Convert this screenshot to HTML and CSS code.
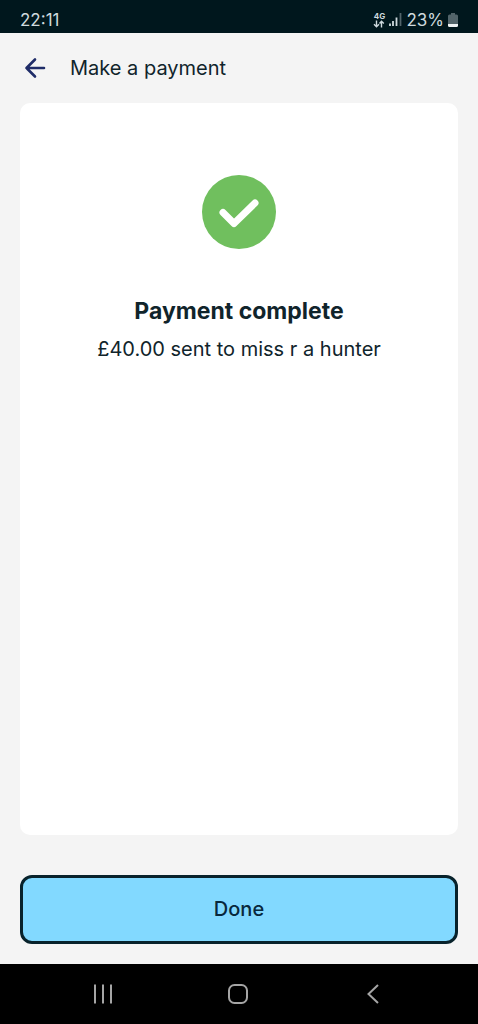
FILE: index.html
```html
<!DOCTYPE html>
<html lang="en">
<head>
<meta charset="utf-8">
<meta name="viewport" content="width=device-width, initial-scale=1">
<title>Make a payment</title>
<link rel="stylesheet" href="styles.css">
</head>
<body>
<div class="status-bar">
  <time class="clock">22:11</time>
  <div class="status-icons">
    <div class="network">
      <span>4G</span>
      <svg width="12" height="8" viewBox="0 0 12 8" aria-hidden="true"><path d="M3.5 .5v6M1 4.3l2.5 2.5L6 4.3M8.5 7.5v-6M6.5 3.5l2-2.3 2.3 2.3" fill="none" stroke="currentColor" stroke-width="1.4"/></svg>
    </div>
    <svg class="signal" width="13" height="14" viewBox="0 0 13 14" aria-hidden="true"><path d="M1 10.5V13M4 8v5M7.5 4.5V13" stroke="#cfdade" stroke-width="1.8"/><path d="M11.5 0v13" stroke="#52646a" stroke-width="1.8"/></svg>
    <span class="percent">23%</span>
    <svg width="10" height="15" viewBox="0 0 10 15" aria-hidden="true"><path d="M3 0h4v1.5h1.5q1.5 0 1.5 1.5v8H0V3q0-1.5 1.5-1.5H3z" fill="#52646a"/><path d="M0 11h10v1.5q0 1.500-1.5 1.500h-7Q0 14 0 12.500z" fill="#eef3f4"/></svg>
  </div>
</div>
<header class="header">
  <button class="back" type="button" aria-label="Back"><svg width="22" height="22" viewBox="0 0 22 22" aria-hidden="true"><path d="M20 11H2.500M11 2.500L2.500 11l8.500 8.500" fill="none" stroke="#1f2c68" stroke-width="2.600" stroke-linecap="round" stroke-linejoin="round"/></svg></button>
  <h1 class="title">Make a payment</h1>
</header>
<main class="card">
  <svg class="tick" width="74" height="74" viewBox="0 0 74 74" aria-hidden="true"><circle cx="37" cy="37" r="37" fill="#70bf5e"/><path d="M21 37.500L32 48.500 53 28" fill="none" stroke="#fff" stroke-width="7" stroke-linecap="round" stroke-linejoin="round"/></svg>
  <h2 class="heading">Payment complete</h2>
  <p class="detail">£40.00 sent to miss r a hunter</p>
</main>
<div class="actions"><button class="done" type="button">Done</button></div>
<nav class="system-nav" aria-label="System">
  <button type="button" aria-label="Recent apps"><svg width="20" height="20" viewBox="0 0 20 20"><path d="M2 .5v19M10 .5v19M18 .5v19"/></svg></button>
  <button type="button" aria-label="Home"><svg width="20" height="20" viewBox="0 0 20 20"><rect x="1" y="1" width="18" height="18" rx="5.500"/></svg></button>
  <button type="button" aria-label="Back"><svg width="20" height="20" viewBox="0 0 20 20"><path d="M15 1L5.500 10l9.500 9"/></svg></button>
</nav>
</body>
</html>
```
FILE: styles.css
```css
* {
  box-sizing: border-box;
}

body {
  margin: 0;
  min-height: 100vh;
  display: flex;
  flex-direction: column;
  background: #f4f4f4;
  color: #10242b;
  font-family: Inter, "Liberation Sans", sans-serif;
}

button {
  padding: 0;
  border: 0;
  background: none;
  font: inherit;
  color: inherit;
  cursor: pointer;
}

svg {
  display: block;
}

.status-bar {
  display: flex;
  justify-content: space-between;
  align-items: center;
  padding: 8px 20px 1px;
  background: #00171d;
  color: #cfdade;
  line-height: 24px;
}

.clock {
  font-size: 17px;
}

.status-icons {
  display: flex;
  align-items: center;
  gap: 4px;
}

.network {
  display: flex;
  flex-direction: column;
  align-items: center;
  font-size: 8px;
  font-weight: 700;
  line-height: 8px;
}

.percent {
  font-size: 17px;
}

.header {
  display: flex;
  align-items: center;
  gap: 24px;
  height: 70px;
  padding: 0 24px;
}

.title {
  margin: 0;
  font-size: 20px;
  font-weight: 400;
  line-height: 28px;
}

.card {
  flex: 1;
  display: flex;
  flex-direction: column;
  align-items: center;
  margin: 0 20px;
  padding: 72px 20px;
  border-radius: 10px;
  background: #fff;
  text-align: center;
}

.heading {
  margin: 46px 0 0;
  font-size: 23px;
  font-weight: 700;
  line-height: 32px;
}

.detail {
  margin: 8px 0 0;
  font-size: 20px;
  line-height: 28px;
}

.actions {
  padding: 40px 20px 20px;
}

.done {
  display: block;
  width: 100%;
  padding: 18px;
  border: 3px solid #08222b;
  border-radius: 12px;
  background: #82d9ff;
  color: #08283c;
  font-size: 20px;
  font-weight: 500;
  line-height: 27px;
}

.system-nav {
  display: flex;
  justify-content: space-around;
  padding: 6px 38px 6px 36px;
  background: #000;
}

.system-nav button {
  display: grid;
  place-items: center;
  width: 48px;
  height: 48px;
}

.system-nav svg {
  fill: none;
  stroke: #a5a5a5;
  stroke-width: 2;
}
```
